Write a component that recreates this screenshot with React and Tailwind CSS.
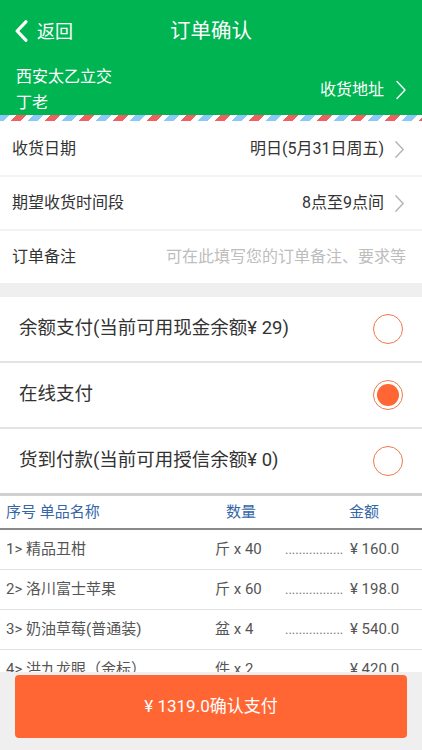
import React from "react";

const items = [
  { name: "精品丑柑", qty: "斤 x 40", amount: "¥ 160.0" },
  { name: "洛川富士苹果", qty: "斤 x 60", amount: "¥ 198.0" },
  { name: "奶油草莓(普通装)", qty: "盆 x 4", amount: "¥ 540.0" },
  { name: "洪九龙眼（金标）", qty: "件 x 2", amount: "¥ 420.0" },
];

const payments = [
  { label: "余额支付(当前可用现金余额¥ 29)", checked: false },
  { label: "在线支付", checked: true },
  { label: "货到付款(当前可用授信余额¥ 0)", checked: false },
];

function Chevron({ className, strokeWidth = 1.6 }) {
  return (
    <svg viewBox="0 0 12 20" className={className} fill="none">
      <path
        d="M2 1.5 L10 10 L2 18.5"
        stroke="currentColor"
        strokeWidth={strokeWidth}
        strokeLinecap="round"
        strokeLinejoin="round"
      />
    </svg>
  );
}

function Radio({ checked }) {
  return (
    <div className="w-[30px] h-[30px] rounded-full border-[1.5px] border-[#f0784a] flex items-center justify-center">
      {checked && <div className="w-[22px] h-[22px] rounded-full bg-[#ff6633]" />}
    </div>
  );
}

export default function App() {
  return (
    <div className="w-[422px] h-[750px] flex flex-col overflow-hidden bg-[#efefef] font-['Roboto','Noto_Sans_CJK_SC',sans-serif]">
      <div className="flex-1 overflow-hidden">
        {/* header */}
        <div className="bg-[#00b451] text-white">
          <div className="h-[62px] flex items-center relative">
            <div className="flex items-center pl-[15px]">
              <Chevron className="w-[13px] h-[22px] rotate-180" strokeWidth={3} />
              <span className="ml-[9px] text-[18px]">返回</span>
            </div>
            <div className="absolute inset-0 flex items-center justify-center text-[20.5px] pointer-events-none">
              订单确认
            </div>
          </div>
          <div className="h-[53px] flex items-center pl-[16px] pr-[15px]">
            <div className="flex-1 text-[16px] leading-[26px] pt-[2px]">
              <div>西安太乙立交</div>
              <div>丁老</div>
            </div>
            <span className="text-[16px] mt-[3px]">收货地址</span>
            <Chevron className="ml-[11px] w-[12px] h-[20px] mt-[3px]" strokeWidth={1.4} />
          </div>
        </div>
        <div className="h-[6px] bg-white bg-[repeating-linear-gradient(135deg,#8cc8f5_0px,#8cc8f5_7px,#ffffff_7px,#ffffff_12px,#f06060_12px,#f06060_19px,#ffffff_19px,#ffffff_24px)]" />

        {/* delivery */}
        <div className="bg-white text-[16px] text-[#333]">
          <div className="h-[56px] flex items-center pl-[12px] pr-[17px] pt-[2px] border-b-2 border-[#f3f3f3]">
            <span className="flex-1">收货日期</span>
            <span>明日(5月31日周五)</span>
            <Chevron className="ml-[10px] w-[11px] h-[19px] text-[#b5b5b5]" />
          </div>
          <div className="h-[54px] flex items-center pl-[12px] pr-[17px] border-b-2 border-[#f3f3f3]">
            <span className="flex-1">期望收货时间段</span>
            <span>8点至9点间</span>
            <Chevron className="ml-[10px] w-[11px] h-[19px] text-[#b5b5b5]" />
          </div>
          <div className="h-[52px] flex items-center pl-[12px] pr-[16px]">
            <span className="flex-1">订单备注</span>
            <span className="text-[#bdbdbd]">可在此填写您的订单备注、要求等</span>
          </div>
        </div>

        {/* payments */}
        <div className="mt-[14px] bg-white">
          {payments.map((p, i) => (
            <div
              key={i}
              className={
                i < 2
                  ? "h-[66px] flex items-center pl-[19px] pr-[19px] border-b-2 border-[#e3e3e3]"
                  : "h-[67px] flex items-center pl-[19px] pr-[19px] border-b-[3px] border-[#d0d0d0]"
              }
            >
              <span className="flex-1 text-[18.5px] text-[#333]">{p.label}</span>
              <Radio checked={p.checked} />
            </div>
          ))}
        </div>

        {/* table */}
        <div className="bg-white">
          <div className="h-[34px] flex items-center pl-[6px] pr-[28px] text-[15px] text-[#3466a8] border-b-2 border-[#8a8a8a]">
            <span className="flex-1">序号 单品名称</span>
            <span className="w-[60px] text-center">数量</span>
            <span className="w-[60px] ml-[63px] text-center">金额</span>
          </div>
          {items.map((it, i) => (
            <div key={i} className="h-[40px] flex items-center pl-[6px] text-[15px] text-[#555] border-b border-[#e2e2e2]">
              <span className="w-[209px]">
                {i + 1}&gt; {it.name}
              </span>
              <span className="w-[70px]">{it.qty}</span>
              <span className="w-[65px] whitespace-nowrap text-[13px] text-[#777]">.................</span>
              <span>{it.amount}</span>
            </div>
          ))}
        </div>
      </div>

      {/* footer */}
      <div className="h-[78px] shrink-0 bg-[#efefef] pt-[3px] px-[15px]">
        <button className="w-full h-[63px] rounded-[4px] bg-[#ff6633] text-white text-[17px]">
          ¥ 1319.0确认支付
        </button>
      </div>
    </div>
  );
}
